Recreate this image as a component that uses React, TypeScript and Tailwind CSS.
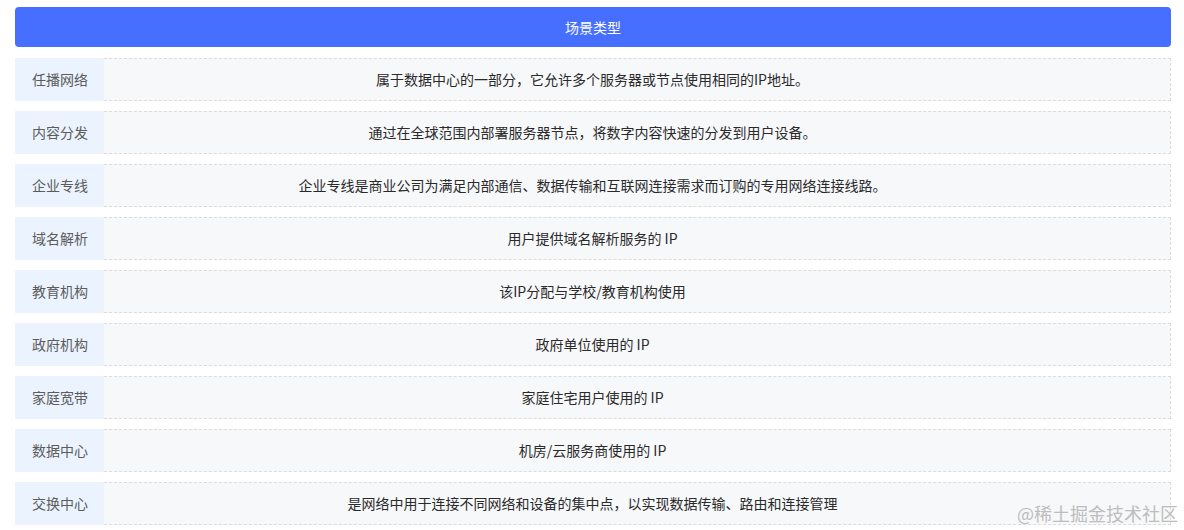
import React from "react";

const rows: [string, string][] = [
  ["任播网络", "属于数据中心的一部分，它允许多个服务器或节点使用相同的IP地址。"],
  ["内容分发", "通过在全球范围内部署服务器节点，将数字内容快速的分发到用户设备。"],
  ["企业专线", "企业专线是商业公司为满足内部通信、数据传输和互联网连接需求而订购的专用网络连接线路。"],
  ["域名解析", "用户提供域名解析服务的 IP"],
  ["教育机构", "该IP分配与学校/教育机构使用"],
  ["政府机构", "政府单位使用的 IP"],
  ["家庭宽带", "家庭住宅用户使用的 IP"],
  ["数据中心", "机房/云服务商使用的 IP"],
  ["交换中心", "是网络中用于连接不同网络和设备的集中点，以实现数据传输、路由和连接管理"],
];

export default function App() {
  return (
    <div
      className="relative w-[1184px] h-[530px] bg-white pl-[15px] pr-[13px] pt-[7px] overflow-hidden"
      style={{ fontFamily: '"Noto Sans CJK SC", "Liberation Sans", sans-serif' }}
    >
      <div className="h-[40px] rounded-[4px] bg-[#476fff] flex items-center justify-center text-white text-[14px]">
        场景类型
      </div>
      <div className="mt-[11px] flex flex-col gap-[10px]">
        {rows.map(([k, v]) => (
          <div key={k} className="flex h-[43px]">
            <div className="w-[89px] shrink-0 bg-[#eaf3fe] flex items-center pl-[17px] text-[14px] text-[#5c5c5c]">
              {k}
            </div>
            <div className="flex-1 bg-[#f7f8fa] border border-l-0 border-dashed border-[#dcdcdc] flex items-center justify-center pr-[89px] pb-[1px] text-[14px] text-[#2a2a2a]">
              {v}
            </div>
          </div>
        ))}
      </div>
      <div className="absolute right-[6px] bottom-[3px] text-[18px] text-[#bdbdbd]">
        @稀土掘金技术社区
      </div>
    </div>
  );
}
